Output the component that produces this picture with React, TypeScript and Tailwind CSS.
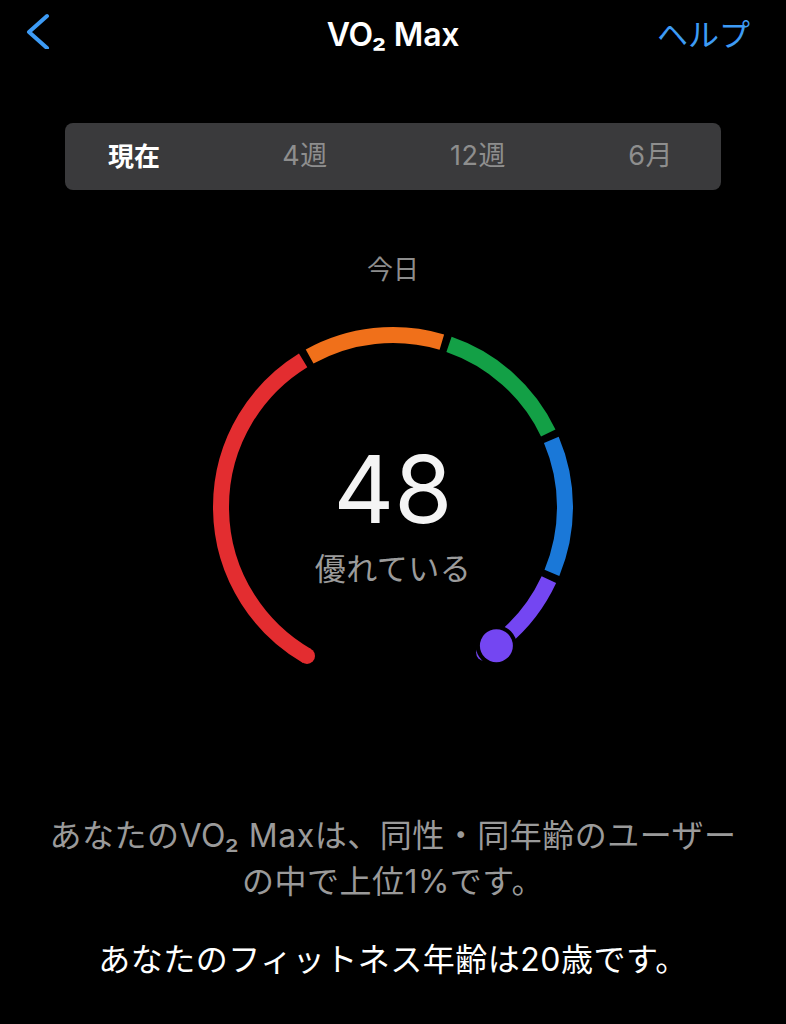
import React from "react";

const FONT = { fontFamily: '"Inter", "Noto Sans CJK JP", sans-serif' };

// gauge geometry (svg coords)
const CX = 200;
const CY = 207;
const R = 172;
const SW = 16;

const segments = [
  { from: 120, to: 238.5, color: "#e32d30", capStart: true },
  { from: 241, to: 286.5, color: "#f0701a" },
  { from: 289, to: 334.5, color: "#13a046" },
  { from: 337, to: 382.5, color: "#1a78d8" },
  { from: 385, to: 418, color: "#7446f2", capEnd: true },
];

function pt(a: number, r = R) {
  const rad = (a * Math.PI) / 180;
  return [CX + r * Math.cos(rad), CY + r * Math.sin(rad)];
}

function arc(a0: number, a1: number) {
  const [x0, y0] = pt(a0);
  const [x1, y1] = pt(a1);
  const large = a1 - a0 > 180 ? 1 : 0;
  return `M${x0} ${y0} A${R} ${R} 0 ${large} 1 ${x1} ${y1}`;
}

function Gauge() {
  const [kx, ky] = pt(53.3, 173);
  return (
    <svg width="400" height="370" viewBox="0 0 400 370" className="absolute inset-0">
      {segments.map((s) => {
        const [sx, sy] = pt(s.from);
        const [ex, ey] = pt(s.to);
        return (
          <g key={s.from}>
            <path d={arc(s.from, s.to)} stroke={s.color} strokeWidth={SW} fill="none" />
            {s.capStart && <circle cx={sx} cy={sy} r={SW / 2} fill={s.color} />}
            {s.capEnd && <circle cx={ex} cy={ey} r={SW / 2} fill={s.color} />}
          </g>
        );
      })}
      <circle cx={kx} cy={ky} r={16.5} fill="#7446f2" stroke="#000" strokeWidth={8} paintOrder="stroke" />
    </svg>
  );
}

export default function App() {
  const tabs = ["現在", "4週", "12週", "6月"];
  return (
    <div className="w-[786px] h-[1024px] bg-black overflow-hidden" style={FONT}>
      {/* nav bar */}
      <div className="grid grid-cols-[1fr_auto_1fr] items-center h-[70px]">
        <div className="pl-[26px] flex items-center">
          <svg width="24" height="36" viewBox="0 0 24 36" className="mb-[8px]">
            <polyline
              points="21,3 3,19 21,35"
              fill="none"
              stroke="#3d9bf5"
              strokeWidth="4"
              strokeLinecap="round"
              strokeLinejoin="round"
            />
          </svg>
        </div>
        <div className="text-white text-[32px] font-semibold tracking-[-0.2px]">VO₂ Max</div>
        <div className="flex justify-end pr-[36px]">
          <span className="text-[#3d9bf5] text-[31px]">ヘルプ</span>
        </div>
      </div>

      {/* segmented control */}
      <div className="mt-[53px] mx-[65px] h-[67px] rounded-[8px] bg-[#3a3a3c] flex items-center justify-between pl-[43px] pr-[48px]">
        {tabs.map((t, i) => (
          <span
            key={t}
            className={
              i === 0
                ? "text-white text-[26px] font-bold"
                : "text-[#8e8e8e] text-[27px] tracking-[0.5px]"
            }
          >
            {t}
          </span>
        ))}
      </div>

      <div className="mt-[63px] text-center text-[#8d8d8d] text-[26px] leading-[34px]">今日</div>

      {/* gauge */}
      <div className="relative mx-auto mt-[13px] w-[400px] h-[370px]">
        <Gauge />
        <div className="absolute left-0 right-0 top-[142px] flex flex-col items-center">
          <div className="text-[#f4f4f4] text-[94px] leading-none">48</div>
          <div className="mt-[13px] text-[#9b9b9b] text-[31px] leading-[40px] tracking-[0.5px]">優れている</div>
        </div>
      </div>

      {/* description */}
      <div className="mt-[143px] text-center text-[#9a9a9a] text-[32px] leading-[46px] tracking-[0.5px]">
        あなたのVO₂ Maxは、同性・同年齢のユーザー
        <br />
        の中で上位1%です。
      </div>
      <div className="mt-[32px] text-center text-white text-[32px] leading-[46px] tracking-[0.5px]">
        あなたのフィットネス年齢は20歳です。
      </div>
    </div>
  );
}
